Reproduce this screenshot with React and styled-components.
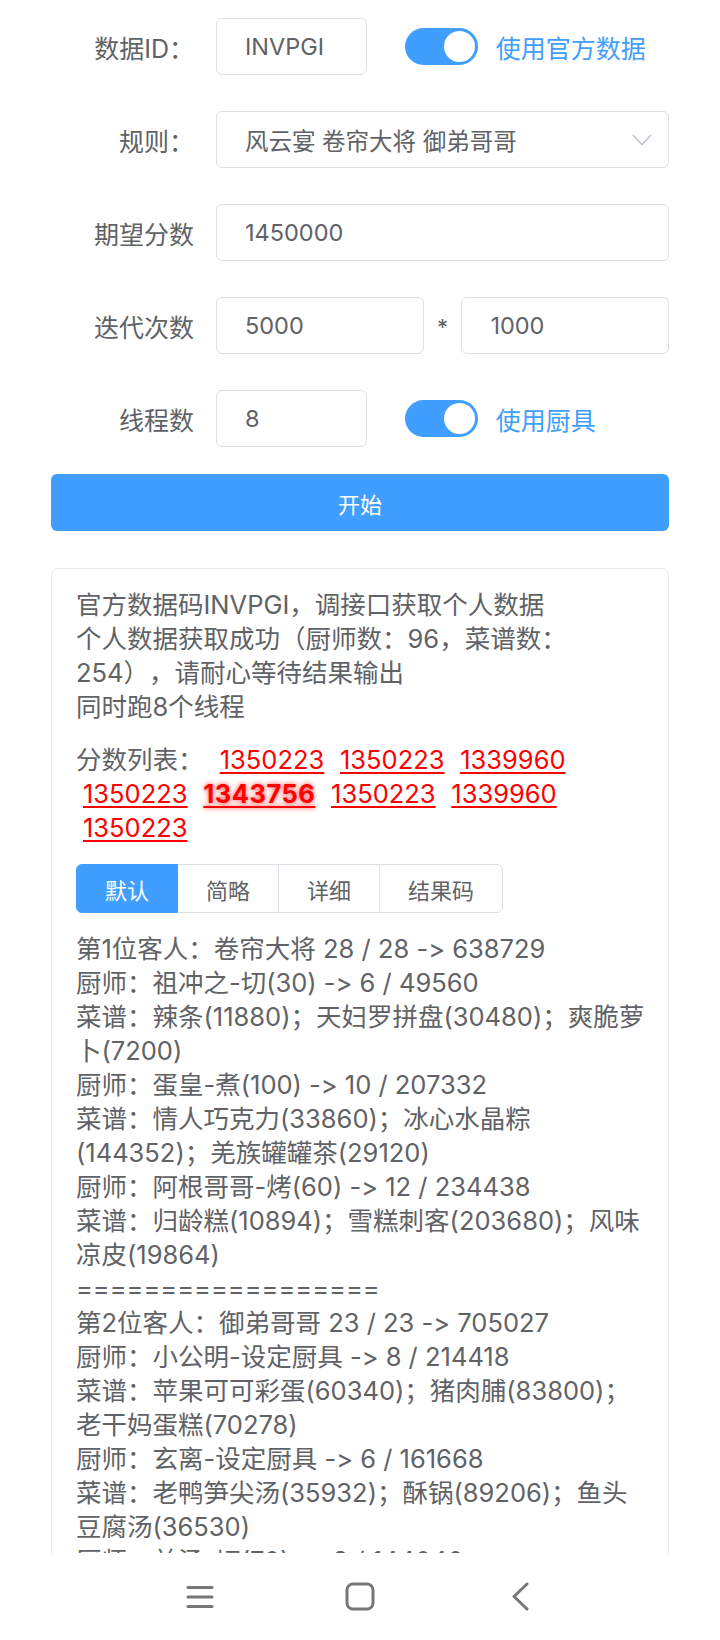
import React from 'react';
import styled, { createGlobalStyle } from 'styled-components';

const FONT = 'Inter, "Noto Sans CJK SC", sans-serif';

const GlobalStyle = createGlobalStyle`
  html, body {
    margin: 0;
    padding: 0;
    background: #fff;
  }
  body {
    font-family: ${FONT};
    color: #606266;
    text-spacing-trim: space-all;
    font-feature-settings: "calt" 0, "liga" 0;
  }
  * {
    box-sizing: border-box;
  }
`;

const Screen = styled.div`
  width: 720px;
  height: 1640px;
  display: flex;
  flex-direction: column;
  overflow: hidden;
  background: #fff;
`;

const Content = styled.main`
  flex: 1;
  overflow: hidden;
  padding: 18px 51px 0;
`;

const FormItem = styled.div`
  display: flex;
  align-items: center;
  height: 57px;
  margin-bottom: ${props => props.$gap ?? 36}px;
`;

const Label = styled.label`
  flex: none;
  width: 165px;
  padding-right: 22px;
  text-align: right;
  font-size: 25px;
  color: #606266;
  white-space: nowrap;
`;

const Field = styled.div`
  flex: 1;
  height: 100%;
  display: grid;
  grid-template-columns: ${props => props.$cols || '1fr'};
  align-items: center;
`;

const TextInput = styled.input`
  width: 100%;
  height: 57px;
  border: 1px solid #dcdfe6;
  border-radius: 6px;
  padding: 0 28px;
  font-family: ${FONT};
  font-size: 23.5px;
  color: #606266;
  background: #fff;
  outline: none;
`;

const Select = styled.div`
  height: 57px;
  border: 1px solid #dcdfe6;
  border-radius: 6px;
  padding: 0 16px 0 28px;
  display: flex;
  align-items: center;
  justify-content: space-between;
  font-size: 23.5px;
  color: #606266;
`;

const Star = styled.span`
  text-align: center;
  font-size: 22px;
  color: #606266;
  align-self: center;
  margin-top: 2px;
`;

const SwitchBox = styled.span`
  display: inline-flex;
  align-items: center;
  gap: 18px;
  font-size: 25px;
  color: #409eff;
  grid-column: 3;
`;

const Track = styled.span`
  position: relative;
  width: 73px;
  height: 37px;
  border-radius: 19px;
  background: ${props => (props.$on ? '#409eff' : '#dcdfe6')};

  &::after {
    content: '';
    position: absolute;
    top: 3px;
    left: ${props => (props.$on ? '39px' : '3px')};
    width: 31px;
    height: 31px;
    border-radius: 50%;
    background: #fff;
  }
`;

const StartButton = styled.button`
  display: block;
  width: 100%;
  height: 57px;
  border: none;
  border-radius: 6px;
  background: #409eff;
  color: #fff;
  font-family: ${FONT};
  font-size: 22px;
`;

const Card = styled.section`
  margin-top: 37px;
  border: 1px solid #e4e7ed;
  border-radius: 8px;
  padding: 19px 17px 40px 24px;
  font-size: 25.5px;
  line-height: 34px;
  color: #606266;
`;

const ScoreLine = styled.div`
  margin-top: 19px;
`;

const ScoreLabel = styled.span`
  margin-right: 2px;
`;

const Score = styled.a`
  margin: 0 1.5px 0 7px;
  color: #f00;
  text-decoration: underline;
  text-decoration-thickness: 2px;
  text-underline-offset: 3px;
  font-weight: ${props => (props.$best ? 700 : 400)};
  letter-spacing: ${props => (props.$best ? '0.5px' : '0')};
  text-shadow: ${props => (props.$best ? '0 0 5px rgba(255, 0, 0, 0.75)' : 'none')};
`;

const Tabs = styled.div`
  display: flex;
  margin: 19px 0;
`;

const Tab = styled.button`
  height: 49px;
  padding: 0 28px;
  margin-left: -1px;
  border: 1px solid ${props => (props.$active ? '#409eff' : '#dcdfe6')};
  background: ${props => (props.$active ? '#409eff' : '#fff')};
  color: ${props => (props.$active ? '#fff' : '#606266')};
  font-family: ${FONT};
  font-size: 22px;
  position: relative;
  z-index: ${props => (props.$active ? 1 : 0)};

  &:first-child {
    margin-left: 0;
    border-radius: 6px 0 0 6px;
  }
  &:last-child {
    border-radius: 0 6px 6px 0;
  }
`;

const NavBar = styled.nav`
  flex: none;
  height: 87px;
  background: #fff;
  display: flex;
  justify-content: center;
  align-items: center;
`;

const NavButton = styled.span`
  width: 160px;
  display: flex;
  justify-content: center;
  align-items: center;
  color: #777;
`;

const scores = [1350223, 1350223, 1339960, 1350223, 1343756, 1350223, 1339960, 1350223];
const best = 1343756;

const details = [
  '第1位客人：卷帘大将 28 / 28 -> 638729',
  '厨师：祖冲之-切(30) -> 6 / 49560',
  '菜谱：辣条(11880)；天妇罗拼盘(30480)；爽脆萝卜(7200)',
  '厨师：蛋皇-煮(100) -> 10 / 207332',
  '菜谱：情人巧克力(33860)；冰心水晶粽(144352)；羌族罐罐茶(29120)',
  '厨师：阿根哥哥-烤(60) -> 12 / 234438',
  '菜谱：归龄糕(10894)；雪糕刺客(203680)；风味凉皮(19864)',
  '==================',
  '第2位客人：御弟哥哥 23 / 23 -> 705027',
  '厨师：小公明-设定厨具 -> 8 / 214418',
  '菜谱：苹果可可彩蛋(60340)；猪肉脯(83800)；老干妈蛋糕(70278)',
  '厨师：玄离-设定厨具 -> 6 / 161668',
  '菜谱：老鸭笋尖汤(35932)；酥锅(89206)；鱼头豆腐汤(36530)',
  '厨师：羊汤-切(70) -> 8 / 144040',
  '菜谱：羊肉汤(40320)；烤羊排(61200)；手抓羊肉(42520)',
];

const tabs = ['默认', '简略', '详细', '结果码'];

function Chevron() {
  return (
    <svg width="20" height="12" viewBox="0 0 20 12" fill="none">
      <polyline points="1,1 10,10.5 19,1" stroke="#c0c4cc" strokeWidth="1.6" />
    </svg>
  );
}

function Toggle({ on, children }) {
  return (
    <SwitchBox>
      <Track $on={on} />
      {children}
    </SwitchBox>
  );
}

export default function App() {
  return (
    <Screen>
      <GlobalStyle />
      <Content>
        <FormItem>
          <Label>数据ID：</Label>
          <Field $cols="8fr 2fr 14fr">
            <TextInput readOnly value="INVPGI" />
            <Toggle on>使用官方数据</Toggle>
          </Field>
        </FormItem>

        <FormItem>
          <Label>规则：</Label>
          <Field>
            <Select>
              <span>风云宴 卷帘大将 御弟哥哥</span>
              <Chevron />
            </Select>
          </Field>
        </FormItem>

        <FormItem>
          <Label>期望分数</Label>
          <Field>
            <TextInput readOnly value="1450000" />
          </Field>
        </FormItem>

        <FormItem>
          <Label>迭代次数</Label>
          <Field $cols="11fr 2fr 11fr">
            <TextInput readOnly value="5000" />
            <Star>*</Star>
            <TextInput readOnly value="1000" />
          </Field>
        </FormItem>

        <FormItem $gap={27}>
          <Label>线程数</Label>
          <Field $cols="8fr 2fr 14fr">
            <TextInput readOnly value="8" />
            <Toggle on>使用厨具</Toggle>
          </Field>
        </FormItem>

        <StartButton>开始</StartButton>

        <Card>
          <div>官方数据码INVPGI，调接口获取个人数据</div>
          <div>个人数据获取成功（厨师数：96，菜谱数：254），请耐心等待结果输出</div>
          <div>同时跑8个线程</div>

          <ScoreLine>
            <ScoreLabel>分数列表：</ScoreLabel>
            {scores.map((s, i) => (
              <React.Fragment key={i}>
                {' '}
                <Score $best={s === best}>{s}</Score>
              </React.Fragment>
            ))}
          </ScoreLine>

          <Tabs>
            {tabs.map((t, i) => (
              <Tab key={t} $active={i === 0}>
                {t}
              </Tab>
            ))}
          </Tabs>

          {details.map((line, i) => (
            <div key={i}>{line}</div>
          ))}
        </Card>
      </Content>

      <NavBar>
        <NavButton>
          <svg width="28" height="24" viewBox="0 0 28 24" fill="none" stroke="currentColor" strokeWidth="3" strokeLinecap="round">
            <line x1="2" y1="2.5" x2="26" y2="2.5" />
            <line x1="2" y1="12" x2="26" y2="12" />
            <line x1="2" y1="21.5" x2="26" y2="21.5" />
          </svg>
        </NavButton>
        <NavButton>
          <svg width="30" height="29" viewBox="0 0 30 29" fill="none" stroke="currentColor" strokeWidth="3">
            <rect x="2" y="2" width="26" height="25" rx="6" />
          </svg>
        </NavButton>
        <NavButton>
          <svg width="20" height="29" viewBox="0 0 20 29" fill="none" stroke="currentColor" strokeWidth="3" strokeLinecap="round" strokeLinejoin="round">
            <polyline points="17,2 4,14.5 17,27" />
          </svg>
        </NavButton>
      </NavBar>
    </Screen>
  );
}
